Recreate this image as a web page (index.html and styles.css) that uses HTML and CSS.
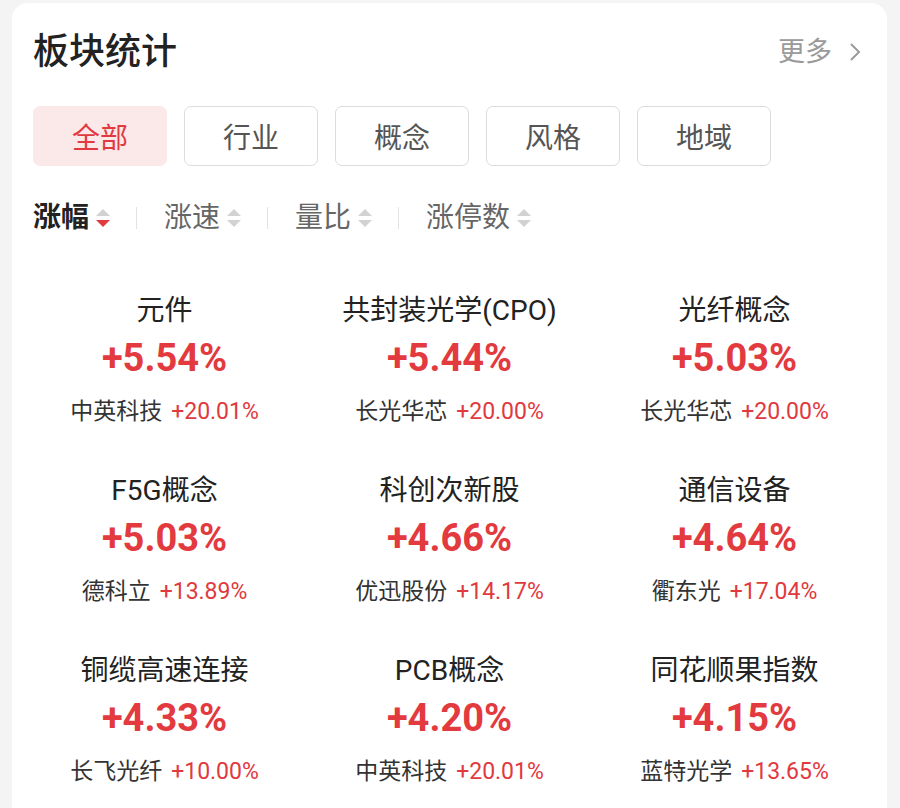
FILE: index.html
```html
<!DOCTYPE html>
<html lang="zh-CN">
<head>
<meta charset="utf-8">
<title>板块统计</title>
<link rel="stylesheet" href="styles.css">
</head>
<body>
<div class="card">
  <div class="header">
    <h1 class="title">板块统计</h1>
    <a class="more">更多<svg class="chev" width="14" height="22" viewBox="0 0 14 22"><polyline points="3,3 11,11 3,19" fill="none" stroke="#9a9a9a" stroke-width="2"/></svg></a>
  </div>
  <div class="tabs">
    <div class="tab active">全部</div>
    <div class="tab">行业</div>
    <div class="tab">概念</div>
    <div class="tab">风格</div>
    <div class="tab">地域</div>
  </div>
  <div class="sorts">
    <div class="sort active">涨幅<svg class="arr" width="14" height="20" viewBox="0 0 14 20"><polygon points="7,1 14,8 0,8" fill="#d2d2d2"/><polygon points="0,12 14,12 7,19" fill="#e23a3e"/></svg></div>
    <span class="sep"></span>
    <div class="sort">涨速<svg class="arr" width="14" height="20" viewBox="0 0 14 20"><polygon points="7,1 14,8 0,8" fill="#d2d2d2"/><polygon points="0,12 14,12 7,19" fill="#d2d2d2"/></svg></div>
    <span class="sep"></span>
    <div class="sort">量比<svg class="arr" width="14" height="20" viewBox="0 0 14 20"><polygon points="7,1 14,8 0,8" fill="#d2d2d2"/><polygon points="0,12 14,12 7,19" fill="#d2d2d2"/></svg></div>
    <span class="sep"></span>
    <div class="sort">涨停数<svg class="arr" width="14" height="20" viewBox="0 0 14 20"><polygon points="7,1 14,8 0,8" fill="#d2d2d2"/><polygon points="0,12 14,12 7,19" fill="#d2d2d2"/></svg></div>
  </div>
  <div class="grid">
    <div class="cell"><div class="name">元件</div><div class="pct">+5.54%</div><div class="lead"><span class="stock">中英科技</span><span class="spct">+20.01%</span></div></div>
    <div class="cell"><div class="name">共封装光学(CPO)</div><div class="pct">+5.44%</div><div class="lead"><span class="stock">长光华芯</span><span class="spct">+20.00%</span></div></div>
    <div class="cell"><div class="name">光纤概念</div><div class="pct">+5.03%</div><div class="lead"><span class="stock">长光华芯</span><span class="spct">+20.00%</span></div></div>
    <div class="cell"><div class="name">F5G概念</div><div class="pct">+5.03%</div><div class="lead"><span class="stock">德科立</span><span class="spct">+13.89%</span></div></div>
    <div class="cell"><div class="name">科创次新股</div><div class="pct">+4.66%</div><div class="lead"><span class="stock">优迅股份</span><span class="spct">+14.17%</span></div></div>
    <div class="cell"><div class="name">通信设备</div><div class="pct">+4.64%</div><div class="lead"><span class="stock">衢东光</span><span class="spct">+17.04%</span></div></div>
    <div class="cell"><div class="name">铜缆高速连接</div><div class="pct">+4.33%</div><div class="lead"><span class="stock">长飞光纤</span><span class="spct">+10.00%</span></div></div>
    <div class="cell"><div class="name">PCB概念</div><div class="pct">+4.20%</div><div class="lead"><span class="stock">中英科技</span><span class="spct">+20.01%</span></div></div>
    <div class="cell"><div class="name">同花顺果指数</div><div class="pct">+4.15%</div><div class="lead"><span class="stock">蓝特光学</span><span class="spct">+13.65%</span></div></div>
  </div>
</div>
</body>
</html>
```
FILE: styles.css
```css
html, body {
  margin: 0;
  padding: 0;
  background: #f4f4f4;
}
body {
  font-family: Roboto, "Noto Sans CJK SC", sans-serif;
  color: #222;
  overflow: hidden;
}
.card {
  margin: 3px 13px 0 12px;
  background: #fff;
  border-radius: 16px 16px 0 0;
  min-height: 900px;
}
.header {
  display: flex;
  justify-content: space-between;
  align-items: center;
  padding: 25px 25px 0 21px;
}
.title {
  margin: 0;
  font-size: 36px;
  line-height: 48px;
  font-weight: 500;
  color: #222;
}
.more {
  display: flex;
  align-items: center;
  gap: 16px;
  font-size: 27px;
  color: #9a9a9a;
  line-height: 40px;
}
.chev {
  display: block;
}
.tabs {
  display: flex;
  gap: 17px;
  padding: 0 21px;
  margin-top: 30px;
}
.tab {
  box-sizing: border-box;
  width: 134px;
  height: 60px;
  border: 1px solid #dcdcdc;
  border-radius: 7px;
  display: flex;
  align-items: center;
  justify-content: center;
  font-size: 28px;
  color: #555;
}
.tab.active {
  background: #fbe8e9;
  border-color: #fbe8e9;
  color: #e0393e;
}
.sorts {
  display: flex;
  align-items: center;
  padding: 0 21px;
  margin-top: 32px;
  height: 40px;
}
.sort {
  display: flex;
  align-items: center;
  gap: 7px;
  font-size: 28px;
  color: #666;
  line-height: 40px;
}
.sort.active {
  color: #222;
  font-weight: 700;
}
.arr {
  display: block;
}
.sep {
  width: 1px;
  height: 22px;
  background: #e3e3e3;
  margin: 0 27px 0 26px;
}
.grid {
  display: grid;
  grid-template-columns: repeat(3, 1fr);
  row-gap: 44px;
  padding: 0 10px;
  margin-top: 53px;
}
.cell {
  display: flex;
  flex-direction: column;
  align-items: center;
}
.name {
  font-size: 28px;
  line-height: 40px;
  color: #222;
}
.pct {
  margin-top: 3px;
  font-size: 38px;
  line-height: 48px;
  font-weight: 700;
  color: #e23a3e;
}
.lead {
  margin-top: 15px;
  line-height: 30px;
  font-size: 23px;
  display: flex;
  gap: 9px;
}
.stock {
  color: #333;
}
.spct {
  color: #e0393e;
}
```
